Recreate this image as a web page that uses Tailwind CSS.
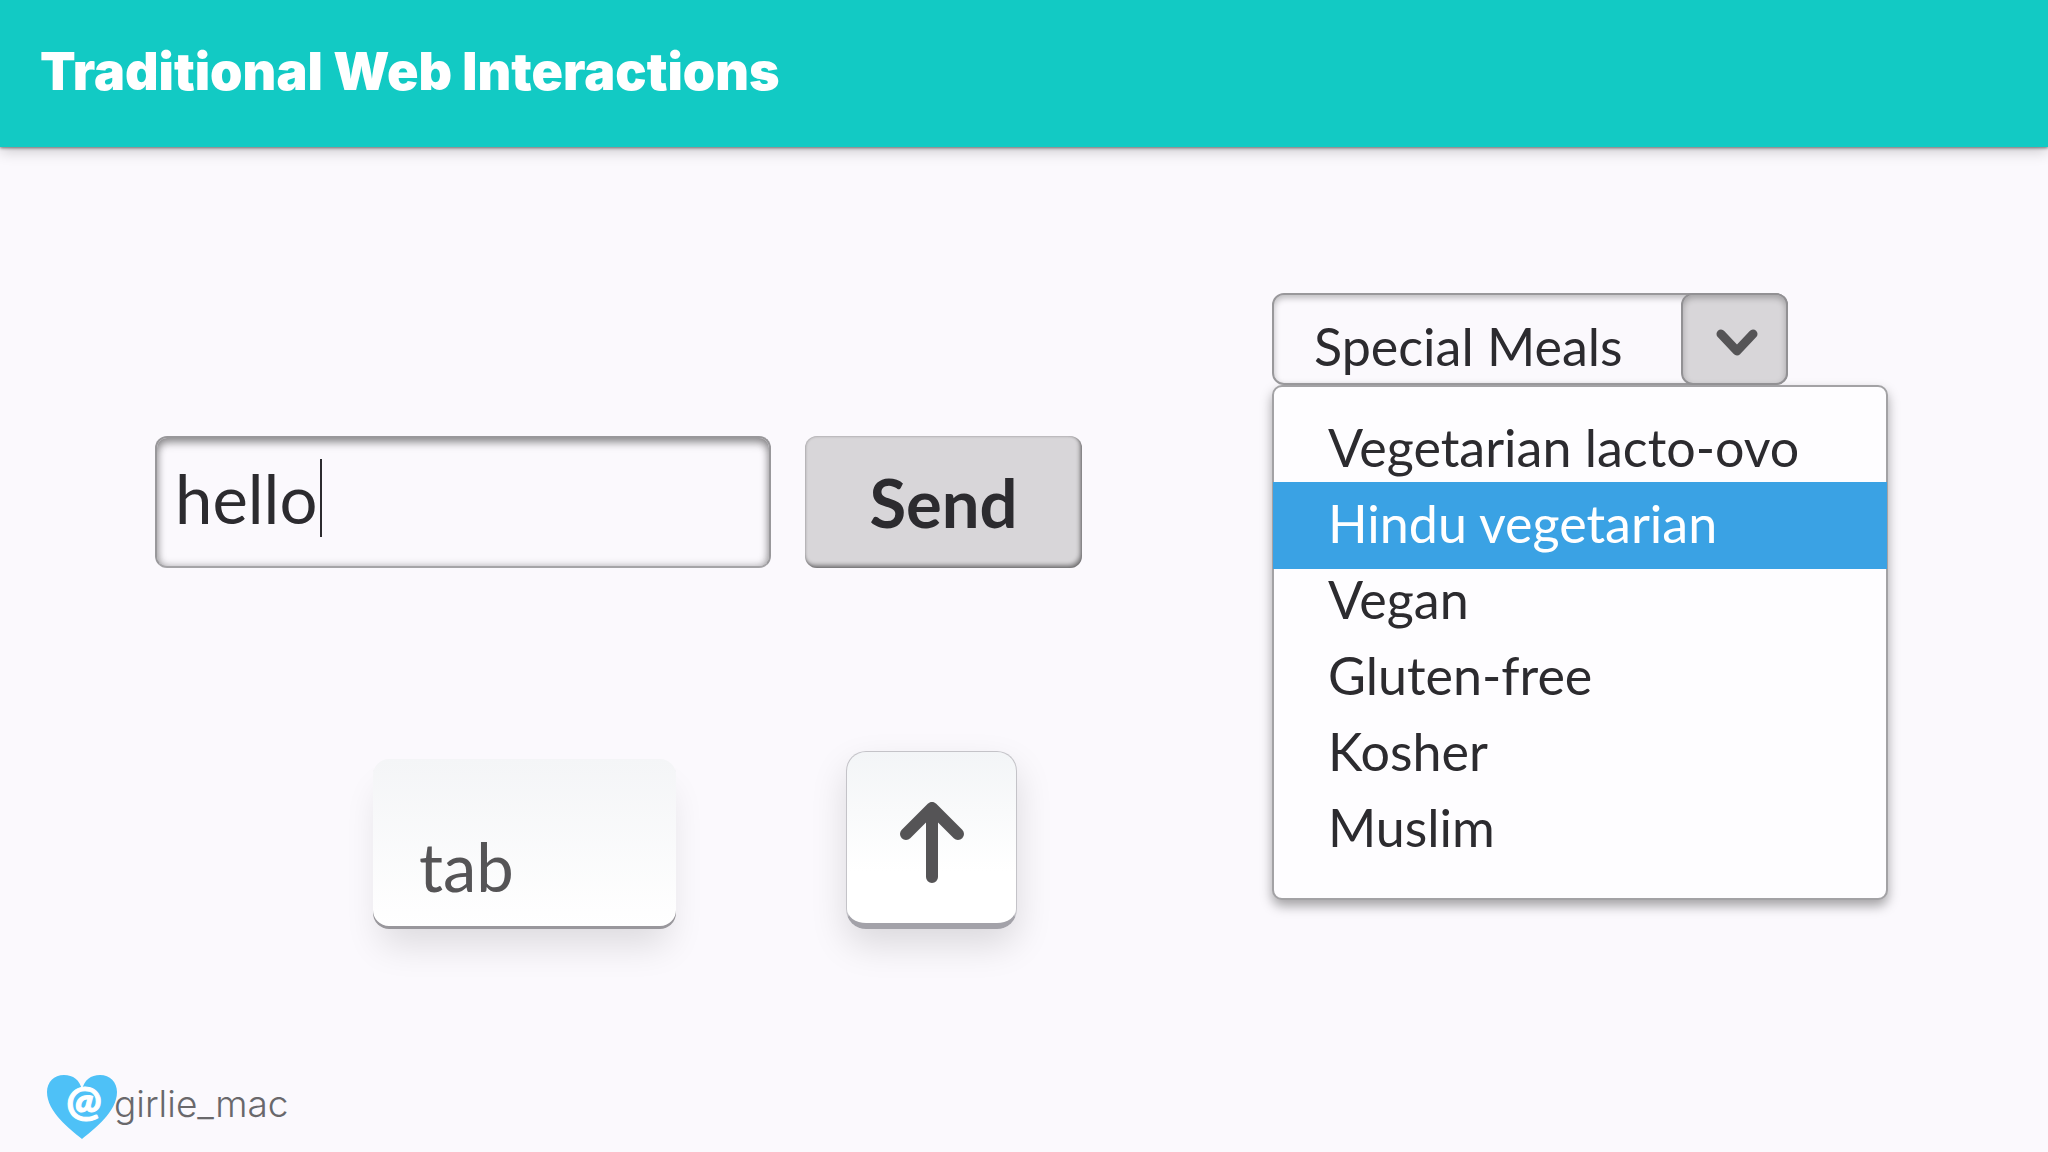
<!DOCTYPE html>
<html lang="en">

<head>
  <meta charset="UTF-8">
  <title>Traditional Web Interactions</title>
  <meta name="viewport" content="width=device-width, initial-scale=1.0">
  <script src="https://cdn.jsdelivr.net/npm/@tailwindcss/browser@4"></script>
</head>

<body class="flex min-h-screen flex-col bg-[#fbf9fd] font-[Lato,sans-serif] text-[#2c2b2f]">
  <header class="bg-[#12cac4] px-10 pt-9 pb-[39px] shadow-[0_1px_3px_rgba(0,0,0,0.5),0_4px_14px_rgba(0,0,0,0.2)]">
    <h1 class="font-[Inter,sans-serif] text-[52px] leading-[72px] font-black text-white">Traditional Web Interactions</h1>
  </header>

  <main class="grid grid-cols-[927fr_616fr] gap-x-[190px] pr-40 pl-[155px]">
    <section class="pt-[289px]">
      <!-- Message form -->
      <form class="flex gap-[34px]">
        <label class="flex h-[132px] flex-1 items-center rounded-xl border-2 border-[#99989b] border-b-[#a5a4a7] pb-2 pl-[18px] shadow-[inset_0_5px_8px_rgba(0,0,0,0.35),inset_0_0_8px_rgba(0,0,0,0.25)]">
          <input type="text" value="hello" aria-label="Message" class="field-sizing-content text-[67px] leading-20 outline-none">
          <span class="ml-[3px] h-[78px] w-[2px] bg-[#2c2b2f]"></span>
        </label>
        <button type="button" class="h-[132px] w-[277px] rounded-xl bg-[#d8d6d9] text-[67px] leading-20 font-bold shadow-[inset_-2px_-3px_4px_rgba(0,0,0,0.4),inset_0_0_3px_rgba(0,0,0,0.3)]">Send</button>
      </form>

      <!-- Keyboard keys -->
      <div class="mt-[183px] flex items-end gap-[170px] pl-[218px]">
        <button type="button" class="h-[170px] w-[303px] rounded-2xl bg-linear-to-b from-[#f4f5f7] to-white pt-11 pl-[46px] text-left text-[67px] leading-20 text-[#555456] shadow-[inset_0_-3px_0_#99979c,0_24px_36px_-8px_rgba(0,0,0,0.12)]">tab</button>
        <button type="button" aria-label="Up arrow" class="flex h-[178px] w-[171px] items-center justify-center rounded-[20px] border border-b-[6px] border-[#c4c3c8] border-b-[#a3a2a9] bg-linear-to-b from-[#f3f5f7] to-white to-70% pt-2 shadow-[0_16px_36px_rgba(0,0,0,0.13)]">
          <svg class="h-[82px] w-[66px]" viewBox="0 0 66 82" fill="none" stroke="#555456" stroke-width="12" stroke-linecap="round" stroke-linejoin="round">
            <path d="M33 76V7M7 33L33 7L59 33" />
          </svg>
        </button>
      </div>
    </section>

    <section class="pt-[146px]">
      <!-- Meal drop-down -->
      <div class="relative w-[516px]">
        <select aria-label="Meal" class="h-[92px] w-full appearance-none rounded-xl border-2 border-[#99989b] pt-3.5 pl-10 text-[52px] leading-[62px] shadow-[inset_0_3px_6px_rgba(0,0,0,0.25)] outline-none">
          <option>Special Meals</option>
        </select>
        <span class="pointer-events-none absolute inset-y-0 right-0 flex w-[107px] items-center justify-center rounded-xl border-2 border-[#929194] bg-[#d8d6d9] pl-1 shadow-[inset_0_3px_6px_rgba(0,0,0,0.25)]">
          <svg class="mt-2 h-7 w-[42px]" viewBox="0 0 42 28" fill="none" stroke="#555456" stroke-width="9" stroke-linecap="round" stroke-linejoin="round">
            <path d="M5 5L21 22L37 5" />
          </svg>
        </span>
      </div>
      <ul role="listbox" aria-label="Special Meals" class="rounded-[10px] border-2 border-[#a3a2a5] bg-[#fefdff] pt-[22px] pb-[33px] text-[52px] leading-[76px] shadow-[0_6px_12px_rgba(0,0,0,0.35)]">
        <li role="option" class="pl-[54px]">Vegetarian lacto-ovo</li>
        <li role="option" aria-selected="true" class="-mx-px -mt-[3px] -mb-2 bg-[#3aa2e4] pt-[3px] pb-2 pl-[55px] text-white">Hindu vegetarian</li>
        <li role="option" class="pl-[54px]">Vegan</li>
        <li role="option" class="pl-[54px]">Gluten-free</li>
        <li role="option" class="pl-[54px]">Kosher</li>
        <li role="option" class="pl-[54px]">Muslim</li>
      </ul>
    </section>
  </main>

  <footer class="mt-auto pb-3 pl-[46px]">
    <a href="#" class="flex items-center font-[Inter,sans-serif] text-[37px] leading-[60px] font-light text-[#69686b]">
      <svg class="-mr-1 h-[66px] w-[72px]" viewBox="0 0 72 66">
        <path fill="#4ec1f7" d="M36 65C24 55 1 38 1 18C1 8 8 1 18 1C27 1 34 6 36 16C38 6 45 1 54 1C64 1 71 8 71 18C71 38 48 55 36 65Z" />
        <text x="38" y="42" text-anchor="middle" fill="white" stroke="white" stroke-width="1" font-family="Lato, sans-serif" font-size="42" font-weight="900">@</text>
      </svg>
      <span class="pb-1.5">girlie_mac</span>
    </a>
  </footer>
</body>

</html>
